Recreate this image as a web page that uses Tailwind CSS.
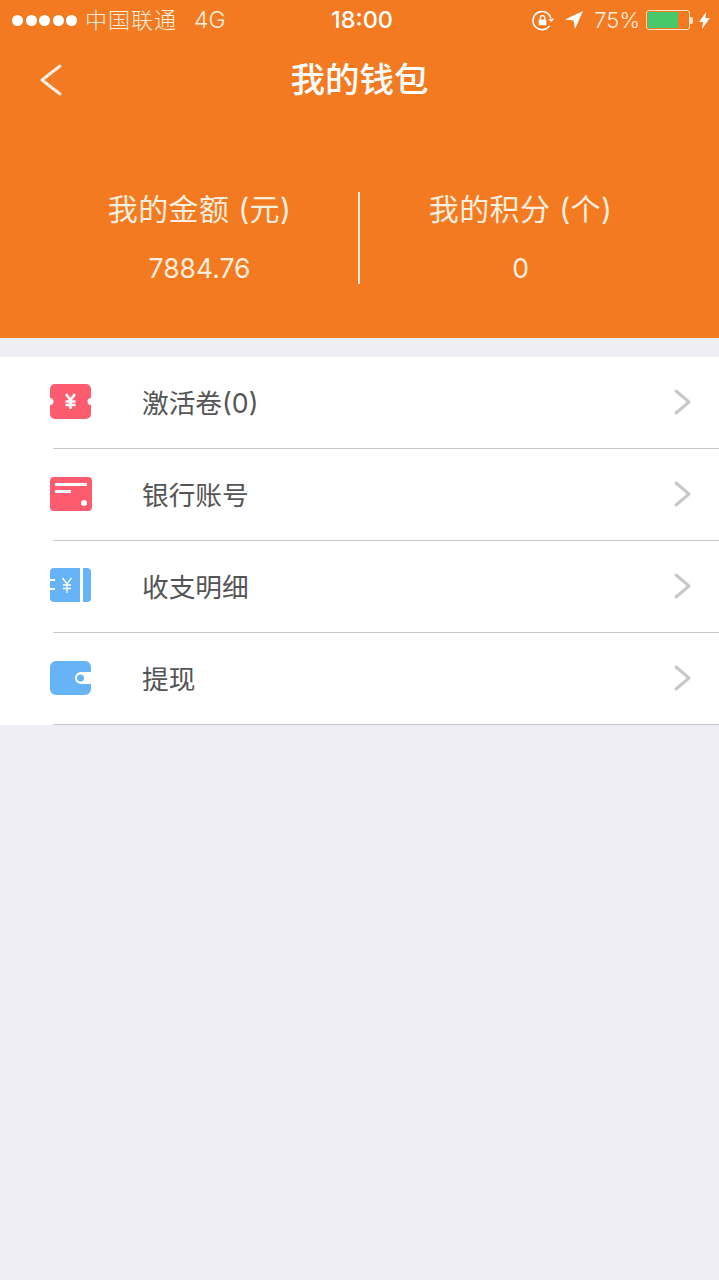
<!DOCTYPE html>
<html lang="zh-CN">
<head>
  <meta charset="UTF-8">
  <meta name="viewport" content="width=device-width, initial-scale=1.0">
  <title>我的钱包</title>
  <script src="https://cdn.jsdelivr.net/npm/@tailwindcss/browser@4"></script>
</head>
<body class="bg-[#eeeef4] min-h-screen font-['Inter','Noto_Sans_CJK_SC',sans-serif]">

  <!-- Orange header -->
  <div class="bg-[#f47a22] h-[338px] text-white">

    <!-- Status bar -->
    <div class="grid grid-cols-[1fr_auto_1fr] items-center h-[40px] pl-[12px] pr-[9px] text-[#fdeedd]">
      <div class="flex items-center">
        <div class="flex gap-[2.500px]">
          <span class="w-[11px] h-[11px] rounded-full bg-white"></span>
          <span class="w-[11px] h-[11px] rounded-full bg-white"></span>
          <span class="w-[11px] h-[11px] rounded-full bg-white"></span>
          <span class="w-[11px] h-[11px] rounded-full bg-white"></span>
          <span class="w-[11px] h-[11px] rounded-full bg-white"></span>
        </div>
        <span class="ml-[8px] text-[22px] leading-none tracking-[1px] font-light">中国联通</span>
        <span class="ml-[17px] text-[23px] leading-none font-light">4G</span>
      </div>
      <div class="ml-[2px] text-[23.500px] font-medium leading-none text-white">18:00</div>
      <div class="flex items-center justify-end">
        <!-- rotation lock -->
        <svg class="w-[23px] h-[23px]" viewBox="0 0 24 24" fill="none" stroke="#fff" stroke-width="1.6" stroke-linecap="round">
          <path d="M20.5 9A9.5 9.5 0 1 0 19 18"/>
          <path d="M18 11l3.5 2.5 2.5-3.5" fill="#fff" stroke="none"/>
          <rect x="8" y="11" width="8" height="6" rx="1" fill="#fff" stroke="none"/>
          <path d="M9.7 11V9.300a2.300 2.300 0 0 1 4.600 0V11" stroke-width="1.300"/>
        </svg>
        <!-- location -->
        <svg class="w-[20px] h-[20px] ml-[10px]" viewBox="0 0 20 20" fill="#fff">
          <path d="M19 1 1 9.500l8.500 1 1.500 8.500z"/>
        </svg>
        <span class="ml-[10px] text-[22px] leading-none font-light">75%</span>
        <!-- battery -->
        <div class="flex items-center ml-[6px]">
          <div class="w-[44px] h-[20px] border border-[#fde3c5] rounded-[3px] p-[1px] flex">
            <div class="w-[30px] h-full bg-[#47c96a]"></div>
          </div>
          <div class="w-[3px] h-[7px] bg-[#fde3c5] rounded-r-[2px]"></div>
        </div>
        <svg class="w-[11px] h-[17px] ml-[6px]" viewBox="0 0 11 17" fill="#fff">
          <path d="M7 0 0 10h4l-1 7 8-11H6.500z"/>
        </svg>
      </div>
    </div>

    <!-- Nav bar -->
    <div class="flex items-center h-[80px] relative">
      <svg class="w-[24px] h-[34px] ml-[39px]" viewBox="0 0 24 34" fill="none" stroke="#fdf0e2" stroke-width="3" stroke-linecap="round" stroke-linejoin="round">
        <path d="M21 3 3 17l18 14"/>
      </svg>
      <h1 class="absolute inset-x-0 text-center text-[34.500px] font-medium leading-none">我的钱包</h1>
    </div>

    <!-- Balances -->
    <div class="flex mt-[72px] h-[92px]">
      <div class="w-[358px] flex flex-col items-center pl-[41px]">
        <p class="text-[30px] leading-none mt-[2px] tracking-[0.400px] text-[#fdeedd]">我的金额 (元)</p>
        <p class="text-[26.500px] leading-none mt-[31px] text-[#fdeedd]">7884.76</p>
      </div>
      <div class="w-[2px] bg-[#fdeedd]"></div>
      <div class="flex-1 flex flex-col items-center pr-[38px]">
        <p class="text-[30px] leading-none mt-[2px] tracking-[0.400px] text-[#fdeedd]">我的积分 (个)</p>
        <p class="text-[26.500px] leading-none mt-[31px] text-[#fdeedd]">0</p>
      </div>
    </div>
  </div>

  <!-- Menu list -->
  <div class="mt-[19px] bg-white">

    <div class="flex items-center h-[92px] pl-[50px] relative">
      <svg class="w-[41px] h-[35px] shrink-0 mb-[4px]" viewBox="0 0 41 35">
        <path d="M5 0h31a5 5 0 0 1 5 5v9a3.500 3.500 0 0 0 0 7v9a5 5 0 0 1-5 5H5a5 5 0 0 1-5-5v-9a3.500 3.500 0 0 0 0-7V5a5 5 0 0 1 5-5z" fill="#fd5b6e"/>
        <path d="M16 10l4.500 6 4.500-6M20.500 16v9M15.500 17.500h10M15.500 21h10" fill="none" stroke="#fff" stroke-width="2.600"/>
      </svg>
      <span class="ml-[51px] text-[26.700px] leading-none text-[#555]">激活卷(0)</span>
      <svg class="ml-auto mr-[28px] mb-[2px] w-[17px] h-[26px]" viewBox="0 0 17 26" fill="none" stroke="#c7c7cc" stroke-width="3" stroke-linecap="round" stroke-linejoin="round">
        <path d="M2 2l13 11L2 24"/>
      </svg>
      <div class="absolute left-[53px] right-0 bottom-0 h-[1px] bg-[#c8c8c8]"></div>
    </div>

    <div class="flex items-center h-[92px] pl-[50px] relative">
      <svg class="w-[42px] h-[34px] shrink-0 mb-[2px]" viewBox="0 0 42 34">
        <rect width="42" height="34" rx="4" fill="#fd5b6e"/>
        <rect x="5" y="6" width="32" height="3" rx="1" fill="#fff"/>
        <rect x="5" y="13" width="16" height="3" rx="1" fill="#fff"/>
        <circle cx="34" cy="26" r="3" fill="#fff"/>
      </svg>
      <span class="ml-[50px] text-[26.700px] leading-none text-[#555]">银行账号</span>
      <svg class="ml-auto mr-[28px] mb-[2px] w-[17px] h-[26px]" viewBox="0 0 17 26" fill="none" stroke="#c7c7cc" stroke-width="3" stroke-linecap="round" stroke-linejoin="round">
        <path d="M2 2l13 11L2 24"/>
      </svg>
      <div class="absolute left-[53px] right-0 bottom-0 h-[1px] bg-[#c8c8c8]"></div>
    </div>

    <div class="flex items-center h-[92px] pl-[50px] relative">
      <svg class="w-[41px] h-[34px] shrink-0 mb-[4px]" viewBox="0 0 41 34">
        <path d="M4 0h26v34H4a4 4 0 0 1-4-4V4a4 4 0 0 1 4-4z" fill="#67b3f8"/>
        <path d="M33 0h4a4 4 0 0 1 4 4v26a4 4 0 0 1-4 4h-4z" fill="#67b3f8"/>
        <path d="M0 12h5M0 21h5" stroke="#fff" stroke-width="2.200"/>
        <path d="M12.500 10l4.500 6 4.500-6M17 16v9M13 17h8M13 20.500h8" fill="none" stroke="#fff" stroke-width="1.300"/>
      </svg>
      <span class="ml-[51px] text-[26.700px] leading-none text-[#555]">收支明细</span>
      <svg class="ml-auto mr-[28px] mb-[2px] w-[17px] h-[26px]" viewBox="0 0 17 26" fill="none" stroke="#c7c7cc" stroke-width="3" stroke-linecap="round" stroke-linejoin="round">
        <path d="M2 2l13 11L2 24"/>
      </svg>
      <div class="absolute left-[53px] right-0 bottom-0 h-[1px] bg-[#c8c8c8]"></div>
    </div>

    <div class="flex items-center h-[92px] pl-[50px] relative">
      <svg class="w-[41px] h-[34px] shrink-0 mb-[2px]" viewBox="0 0 41 34">
        <path d="M6 0h29a6 6 0 0 1 6 6v5H31a6 6 0 0 0 0 12h10v5a6 6 0 0 1-6 6H6a6 6 0 0 1-6-6V6a6 6 0 0 1 6-6z" fill="#67b3f8"/>
        <circle cx="30.500" cy="17" r="3.500" fill="#67b3f8"/>
      </svg>
      <span class="ml-[51px] text-[26.700px] leading-none text-[#555]">提现</span>
      <svg class="ml-auto mr-[28px] mb-[2px] w-[17px] h-[26px]" viewBox="0 0 17 26" fill="none" stroke="#c7c7cc" stroke-width="3" stroke-linecap="round" stroke-linejoin="round">
        <path d="M2 2l13 11L2 24"/>
      </svg>
      <div class="absolute left-[53px] right-0 bottom-0 h-[1px] bg-[#c8c8c8]"></div>
    </div>
  </div>

</body>
</html>
